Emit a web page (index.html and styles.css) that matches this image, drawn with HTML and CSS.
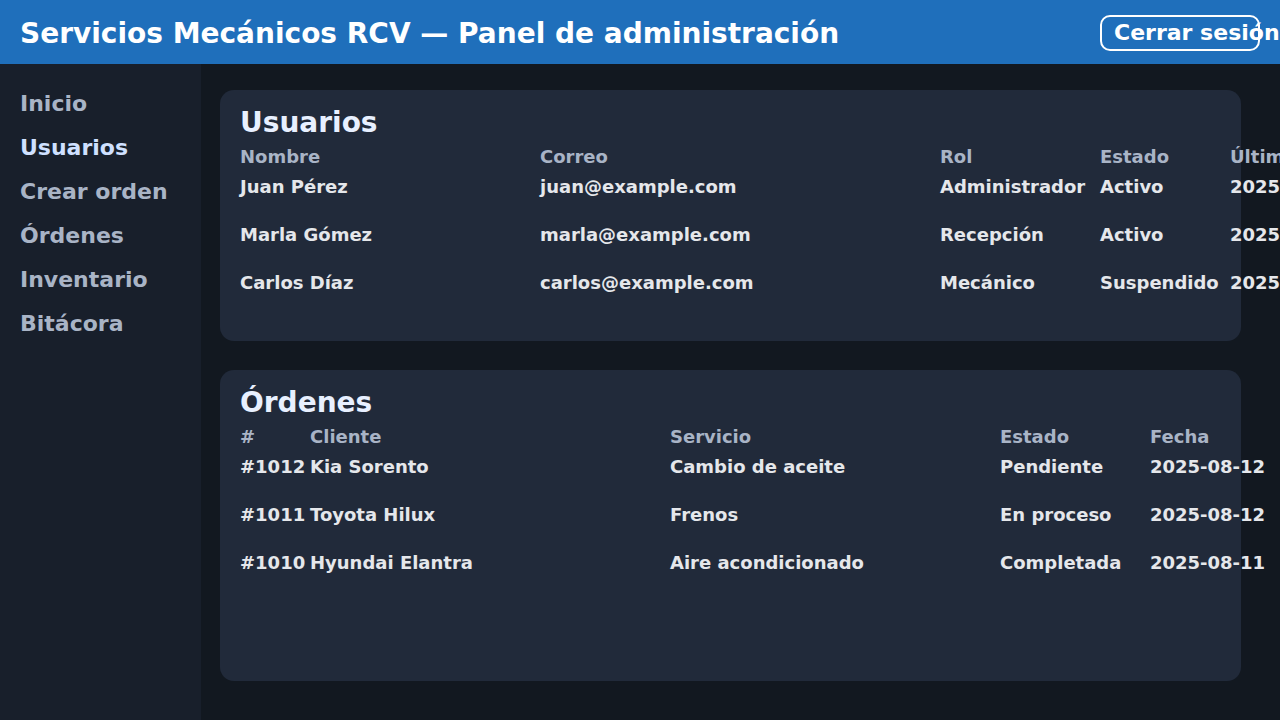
FILE: index.html
```html
<!DOCTYPE html>
<html lang="es">
<head>
<meta charset="utf-8">
<title>Servicios Mecánicos RCV — Panel de administración</title>
<link rel="stylesheet" href="styles.css">
</head>
<body>
<header class="topbar">
  <h1 class="brand">Servicios Mecánicos RCV — Panel de administración</h1>
  <button class="logout" type="button">Cerrar sesión</button>
</header>
<div class="layout">
  <nav class="sidebar">
    <a class="nav-item" href="#">Inicio</a>
    <a class="nav-item active" href="#">Usuarios</a>
    <a class="nav-item" href="#">Crear orden</a>
    <a class="nav-item" href="#">Órdenes</a>
    <a class="nav-item" href="#">Inventario</a>
    <a class="nav-item" href="#">Bitácora</a>
  </nav>
  <main class="content">
    <section class="card">
      <h2 class="card-title">Usuarios</h2>
      <div class="grid users">
        <div class="th">Nombre</div><div class="th">Correo</div><div class="th">Rol</div><div class="th">Estado</div><div class="th">Último acceso</div>
        <div class="td">Juan Pérez</div><div class="td">juan@example.com</div><div class="td">Administrador</div><div class="td">Activo</div><div class="td">2025-08-12 09:14</div>
        <div class="td">Marla Gómez</div><div class="td">marla@example.com</div><div class="td">Recepción</div><div class="td">Activo</div><div class="td">2025-08-12 08:47</div>
        <div class="td">Carlos Díaz</div><div class="td">carlos@example.com</div><div class="td">Mecánico</div><div class="td">Suspendido</div><div class="td">2025-08-10 17:32</div>
      </div>
    </section>
    <section class="card card-tall">
      <h2 class="card-title">Órdenes</h2>
      <div class="grid orders">
        <div class="th">#</div><div class="th">Cliente</div><div class="th">Servicio</div><div class="th">Estado</div><div class="th">Fecha</div>
        <div class="td">#1012</div><div class="td">Kia Sorento</div><div class="td">Cambio de aceite</div><div class="td">Pendiente</div><div class="td">2025-08-12</div>
        <div class="td">#1011</div><div class="td">Toyota Hilux</div><div class="td">Frenos</div><div class="td">En proceso</div><div class="td">2025-08-12</div>
        <div class="td">#1010</div><div class="td">Hyundai Elantra</div><div class="td">Aire acondicionado</div><div class="td">Completada</div><div class="td">2025-08-11</div>
      </div>
    </section>
  </main>
</div>
</body>
</html>
```
FILE: styles.css
```css
* { box-sizing: border-box; }
html, body {
  margin: 0;
  height: 100%;
  overflow: hidden;
}
body {
  font-family: "DejaVu Sans", "Liberation Sans", sans-serif;
  font-weight: bold;
  background: #121820;
  color: #e5e7eb;
}
.topbar {
  height: 64px;
  background: #1f6fbb;
  display: flex;
  align-items: center;
  justify-content: space-between;
  padding: 0 20px;
}
.brand {
  margin: 2px 0 0;
  font-size: 28px;
  font-weight: bold;
  color: #ffffff;
  white-space: nowrap;
}
.logout {
  width: 160px;
  height: 36px;
  flex: none;
  margin-top: 1px;
  padding: 0 12px;
  border: 2px solid #ffffff;
  border-radius: 10px;
  background: transparent;
  color: #ffffff;
  font-family: inherit;
  font-weight: bold;
  font-size: 22px;
  text-align: left;
  white-space: nowrap;
  overflow: visible;
}
.layout {
  display: flex;
  height: calc(100% - 64px);
}
.sidebar {
  width: 201px;
  flex: none;
  background: #181f2b;
  padding: 18px 20px;
  display: flex;
  flex-direction: column;
}
.nav-item {
  font-size: 22px;
  line-height: 44px;
  color: #a9b4c6;
  text-decoration: none;
  white-space: nowrap;
}
.nav-item.active { color: #cfe0ff; }
.content {
  flex: 1;
  min-width: 0;
  padding: 26px 39px 0 19px;
  display: flex;
  flex-direction: column;
  gap: 29px;
}
.card {
  background: #212a3a;
  border-radius: 14px;
  padding: 16px 20px 0;
  height: 251px;
  flex: none;
}
.card-tall { height: 311px; }
.card-title {
  margin: 0 0 7px;
  font-size: 28px;
  color: #e8f0ff;
  line-height: normal;
}
.grid {
  display: grid;
  font-size: 18px;
  white-space: nowrap;
}
.users { grid-template-columns: 300px 400px 160px 130px 200px; }
.orders { grid-template-columns: 70px 360px 330px 150px 150px; }
.th {
  color: #a9b4c6;
  padding-bottom: 9px;
}
.td {
  color: #e5e7eb;
  padding-bottom: 27px;
}
```
